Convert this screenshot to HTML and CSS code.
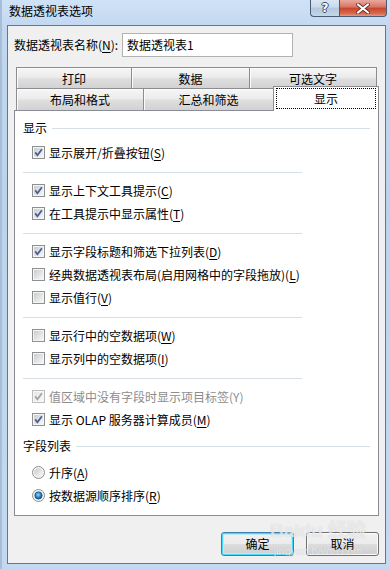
FILE: index.html
```html
<!DOCTYPE html>
<html lang="zh-CN">
<head>
<meta charset="utf-8">
<title>数据透视表选项</title>
<link rel="stylesheet" href="styles.css">
</head>
<body>
<svg class="defs" width="0" height="0" aria-hidden="true">
  <defs>
    <linearGradient id="cbg" x1="0" y1="0" x2="1" y2="1">
      <stop offset="0" stop-color="#c9ccd1"/>
      <stop offset="1" stop-color="#f7f7f7"/>
    </linearGradient>
    <linearGradient id="cbgd" x1="0" y1="0" x2="1" y2="1">
      <stop offset="0" stop-color="#e6e6e6"/>
      <stop offset="1" stop-color="#f7f7f7"/>
    </linearGradient>
    <linearGradient id="rbg" x1="0" y1="0" x2="1" y2="1">
      <stop offset="0" stop-color="#c6c9ce"/>
      <stop offset="1" stop-color="#f9f9f9"/>
    </linearGradient>
    <radialGradient id="rdot" cx="0.45" cy="0.4" r="0.6">
      <stop offset="0" stop-color="#8fdcff"/>
      <stop offset="0.55" stop-color="#2a8fd0"/>
      <stop offset="1" stop-color="#0d4a7e"/>
    </radialGradient>
    <symbol id="box" viewBox="0 0 13 13">
      <rect x="0.5" y="0.5" width="12" height="12" fill="#f5f5f5" stroke="#8e8f8f"/>
      <rect x="2" y="2" width="9" height="9" fill="url(#cbg)"/>
    </symbol>
    <symbol id="boxd" viewBox="0 0 13 13">
      <rect x="0.5" y="0.5" width="12" height="12" fill="#f7f7f7" stroke="#bcbcbc"/>
      <rect x="2" y="2" width="9" height="9" fill="url(#cbgd)"/>
    </symbol>
    <symbol id="chk" viewBox="0 0 13 13">
      <path d="M3.2 6.4 L5.4 9.2 L9.9 3.2" fill="none" stroke="#4b5f96" stroke-width="1.8" stroke-linejoin="miter"/>
    </symbol>
    <symbol id="chkd" viewBox="0 0 13 13">
      <path d="M3.2 6.4 L5.4 9.2 L9.9 3.2" fill="none" stroke="#a3a3a3" stroke-width="1.8"/>
    </symbol>
    <symbol id="radio" viewBox="0 0 13 13">
      <circle cx="6.5" cy="6.5" r="6" fill="#f4f4f4" stroke="#8e8f8f"/>
      <circle cx="6.5" cy="6.5" r="4.3" fill="url(#rbg)"/>
    </symbol>
    <symbol id="rdotsym" viewBox="0 0 13 13">
      <circle cx="6.5" cy="6.5" r="3.6" fill="url(#rdot)" stroke="#1d4d7c" stroke-width="0.8"/>
    </symbol>
  </defs>
</svg>

<div class="window">
  <div class="titlebar">
    <span class="title">数据透视表选项</span>
    <div class="caps">
      <div class="cap help">?</div>
      <div class="cap close">
        <svg width="14" height="11" viewBox="0 0 14 11"><path d="M2 1.5 L12 9.5 M12 1.5 L2 9.5" stroke="#5a2a25" stroke-width="3.6" stroke-linecap="square"/><path d="M2 1.5 L12 9.5 M12 1.5 L2 9.5" stroke="#ffffff" stroke-width="2" stroke-linecap="square"/></svg>
      </div>
    </div>
  </div>

  <div class="client">
    <div class="namerow">
      <span class="namelabel">数据透视表名称(<u>N</u>):</span>
      <div class="input">数据透视表1</div>
    </div>

    <div class="tabs">
      <div class="tabrow r1">
        <div class="tab t1">打印</div>
        <div class="tab t2">数据</div>
        <div class="tab t3">可选文字</div>
      </div>
      <div class="tabrow r2">
        <div class="tab t4">布局和格式</div>
        <div class="tab t5">汇总和筛选</div>
        <div class="tab sel"><span class="focus">显示</span></div>
      </div>
    </div>

    <div class="panel">
      <div class="ghead">显示</div>
      <div class="row first"><svg class="ic"><use href="#box"/><use href="#chk"/></svg><span>显示展开/折叠按钮(<u>S</u>)</span></div>
      <div class="sep"></div>
      <div class="row"><svg class="ic"><use href="#box"/><use href="#chk"/></svg><span>显示上下文工具提示(<u>C</u>)</span></div>
      <div class="row"><svg class="ic"><use href="#box"/><use href="#chk"/></svg><span>在工具提示中显示属性(<u>T</u>)</span></div>
      <div class="sep"></div>
      <div class="row"><svg class="ic"><use href="#box"/><use href="#chk"/></svg><span>显示字段标题和筛选下拉列表(<u>D</u>)</span></div>
      <div class="row"><svg class="ic"><use href="#box"/></svg><span>经典数据透视表布局(启用网格中的字段拖放)(<u>L</u>)</span></div>
      <div class="row"><svg class="ic"><use href="#box"/></svg><span>显示值行(<u>V</u>)</span></div>
      <div class="sep"></div>
      <div class="row"><svg class="ic"><use href="#box"/></svg><span>显示行中的空数据项(<u>W</u>)</span></div>
      <div class="row"><svg class="ic"><use href="#box"/></svg><span>显示列中的空数据项(<u>I</u>)</span></div>
      <div class="sep"></div>
      <div class="row disabled"><svg class="ic"><use href="#boxd"/><use href="#chkd"/></svg><span>值区域中没有字段时显示项目标签(Y)</span></div>
      <div class="row"><svg class="ic"><use href="#box"/><use href="#chk"/></svg><span>显示 OLAP 服务器计算成员(<u>M</u>)</span></div>
      <div class="ghead second">字段列表</div>
      <div class="row rfirst"><svg class="ic"><use href="#radio"/></svg><span>升序(<u>A</u>)</span></div>
      <div class="row"><svg class="ic"><use href="#radio"/><use href="#rdotsym"/></svg><span>按数据源顺序排序(<u>R</u>)</span></div>
    </div>

    <div class="buttons">
      <div class="btn default">确定</div>
      <div class="btn">取消</div>
    </div>

    <div class="watermark">
      <span class="wm1">Baidu 经验</span>
      <span class="wm2">jingyan.baidu.com</span>
    </div>
  </div>
</div>
</body>
</html>
```

FILE: styles.css
```css
html, body {
  margin: 0;
  padding: 0;
}

body {
  width: 390px;
  height: 569px;
  overflow: hidden;
  font-family: "Noto Sans CJK SC", "Microsoft YaHei", sans-serif;
  font-size: 12px;
  color: #000;
}

.defs {
  position: absolute;
  width: 0;
  height: 0;
  overflow: hidden;
}

.window {
  width: 390px;
  height: 569px;
  box-sizing: border-box;
  background: linear-gradient(to bottom, #cfe2f7 0, #c1d7f0 30px, #bcd3ed 200px, #c4d9f1 569px);
  box-shadow: inset 2px 0 0 #a8bdd6, inset 1px 0 0 #e3eefa;
}

.titlebar {
  height: 25px;
  display: flex;
  justify-content: space-between;
  align-items: flex-start;
}

.title {
  margin-left: 9px;
  margin-top: 3px;
  line-height: 16px;
  font-size: 12px;
  color: #000;
}

.caps {
  display: flex;
  margin-right: 3px;
}

.cap {
  height: 17px;
  box-sizing: border-box;
  border: 1px solid #4a5a70;
  border-top: none;
  display: flex;
  align-items: center;
  justify-content: center;
}

.help {
  width: 29px;
  border-radius: 0 0 0 4px;
  border-right: none;
  background: linear-gradient(to bottom, #dbe7f3 0, #c9d9ea 45%, #b3c8de 50%, #c4d6ea 100%);
  color: #fff;
  font-family: "DejaVu Sans", sans-serif;
  font-weight: bold;
  font-size: 12px;
  line-height: 15px;
  text-shadow: 1px 0 0 #3e4a5a, -1px 0 0 #3e4a5a, 0 1px 0 #3e4a5a, 0 -1px 0 #3e4a5a;
}

.close {
  width: 48px;
  border-radius: 0 0 4px 0;
  background: linear-gradient(to bottom, #e9a99f 0, #d8735f 45%, #c7432b 50%, #d86a4f 85%, #e99a7f 100%);
}

.client {
  position: relative;
  margin-left: 7px;
  width: 379px;
  height: 539px;
  box-sizing: border-box;
  border: 1px solid #66768a;
  background: #f0f0f0;
}

.namerow {
  display: flex;
  align-items: center;
  margin-top: 7px;
  height: 24px;
}

.namelabel {
  width: 108px;
  padding-left: 6px;
  line-height: 16px;
}

.namelabel u, .row u {
  text-underline-offset: 2px;
}

.input {
  width: 171px;
  height: 24px;
  box-sizing: border-box;
  border: 1px solid #b2b2b2;
  background: #fff;
  padding-left: 4px;
  line-height: 22px;
}

.tabs {
  margin-top: 10px;
  margin-left: 6px;
}

.tabrow {
  display: flex;
  align-items: flex-start;
  padding-left: 2px;
}

.r1 {
  height: 21px;
}

.r2 {
  height: 22px;
}

.tab {
  box-sizing: border-box;
  border: 1px solid #8b8d93;
  border-bottom: none;
  background: linear-gradient(to bottom, #f6f6f6 0, #ececec 45%, #dedede 55%, #d2d2d2 100%);
  box-shadow: inset 1px 1px 0 #fbfbfb;
  display: flex;
  align-items: center;
  justify-content: center;
  line-height: 16px;
}

.r1 .tab {
  height: 21px;
  padding-top: 1px;
}

.r2 .tab {
  height: 22px;
}

.t1 { width: 116px; }
.t2 { width: 119px; margin-left: -1px; }
.t3 { width: 128px; margin-left: -1px; }
.t4 { width: 128px; }
.t5 { width: 131px; margin-left: -1px; }

.r2 .tab.sel {
  position: relative;
  z-index: 2;
  width: 106px;
  height: 25px;
  margin-left: -1px;
  margin-top: -2px;
  background: #fff;
  box-shadow: none;
  padding: 1px 2px 2px 2px;
  align-items: stretch;
}

.focus {
  flex: 1;
  border: 1px dotted #000;
  display: flex;
  align-items: center;
  justify-content: center;
}

.panel {
  margin-left: 6px;
  width: 365px;
  height: 406px;
  box-sizing: border-box;
  border: 1px solid #898c95;
  background: #fff;
  padding: 9px 8px 0 8px;
}

.ghead {
  height: 16px;
  line-height: 16px;
  display: flex;
  align-items: center;
  gap: 5px;
}

.ghead::after {
  content: "";
  flex: 1;
  height: 1px;
  background: #d6dfe6;
}

.ghead.second {
  margin-top: 7px;
}

.row {
  height: 23px;
  display: flex;
  align-items: center;
  padding-left: 9px;
  gap: 4px;
  line-height: 16px;
}

.row.first {
  margin-top: 5px;
}

.row.rfirst {
  margin-top: 7px;
}

.row.disabled {
  color: #8d8d8d;
}

.ic {
  width: 13px;
  height: 13px;
  flex: none;
}

.sep {
  width: 279px;
  height: 1px;
  background: #d6dfe6;
  margin: 8px 0 6px 0;
}

.buttons {
  display: flex;
  justify-content: flex-end;
  gap: 12px;
  margin-top: 16px;
  padding-right: 6px;
}

.btn {
  width: 73px;
  height: 24px;
  box-sizing: border-box;
  border: 1px solid #707070;
  border-radius: 3px;
  background: linear-gradient(to bottom, #f2f2f2 0, #ebebeb 50%, #dddddd 50%, #cfcfcf 100%);
  box-shadow: inset 0 0 0 1px #fcfcfc;
  display: flex;
  align-items: center;
  justify-content: center;
  line-height: 16px;
}

.btn.default {
  border-color: #3c7fb1;
  box-shadow: inset 0 0 0 1px #48d8fb, inset 0 0 0 2px #bde9fb;
}

.watermark {
  position: absolute;
  left: 262px;
  top: 492px;
  display: flex;
  flex-direction: column;
  align-items: center;
  white-space: nowrap;
  pointer-events: none;
  color: rgba(255, 255, 255, 0.6);
  text-shadow: 0 0 1px rgba(160, 160, 160, 0.5);
}

.wm1 {
  font-family: "Liberation Sans", "Noto Sans CJK SC", sans-serif;
  font-size: 19px;
  font-weight: bold;
  line-height: 26px;
}

.wm2 {
  font-family: "Liberation Sans", sans-serif;
  font-size: 11px;
  line-height: 14px;
}
```
